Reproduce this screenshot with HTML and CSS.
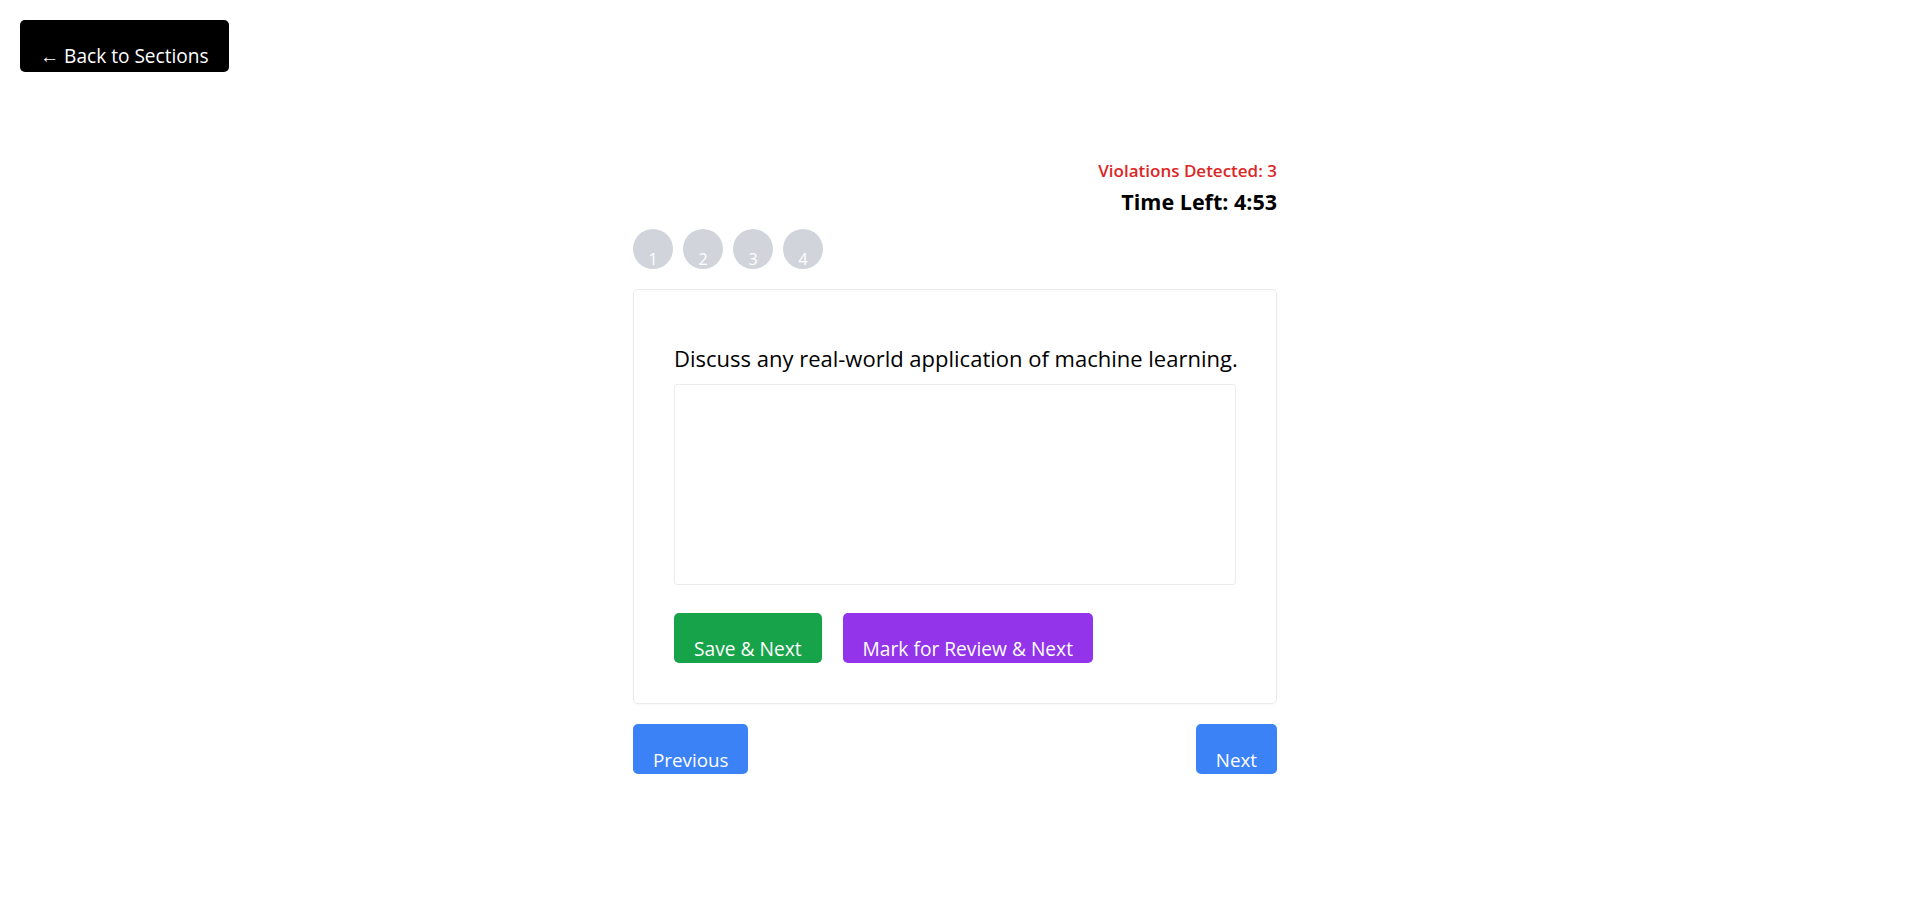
FILE: index.html
```html
<!DOCTYPE html>
<html lang="en">
<head>
<meta charset="utf-8">
<title>Exam</title>
<link rel="stylesheet" href="styles.css">
</head>
<body>
  <button class="back-btn">← Back to Sections</button>
  <main class="exam">
    <div class="status">
      <div class="violations">Violations Detected: 3</div>
      <div class="timer">Time Left: 4:53</div>
    </div>
    <div class="palette">
      <span class="qnum">1</span>
      <span class="qnum">2</span>
      <span class="qnum">3</span>
      <span class="qnum">4</span>
    </div>
    <section class="card">
      <h2 class="question">Discuss any real-world application of machine learning.</h2>
      <textarea class="answer"></textarea>
      <div class="actions">
        <button class="btn btn-green">Save &amp; Next</button>
        <button class="btn btn-purple">Mark for Review &amp; Next</button>
      </div>
    </section>
    <div class="nav">
      <button class="btn btn-blue">Previous</button>
      <button class="btn btn-blue">Next</button>
    </div>
  </main>
</body>
</html>
```

FILE: styles.css
```css
* { box-sizing: border-box; }

html, body {
  margin: 0;
  background: #ffffff;
}

body {
  padding: 20px;
  font-family: "Open Sans", "Noto Sans", sans-serif;
  color: #000;
}

button {
  font-family: inherit;
  border: none;
  cursor: pointer;
}

.back-btn {
  display: block;
  height: 52px;
  padding: 26px 20px 6px;
  background: #000;
  color: #fff;
  font-size: 19.1px;
  line-height: 20px;
  border-radius: 5px;
}

.exam {
  width: 644px;
  margin: 87px auto 0;
}

.status {
  text-align: right;
}

.violations {
  color: #dc2626;
  font-weight: 600;
  font-size: 17px;
  line-height: 24px;
}

.timer {
  margin-top: 4px;
  font-weight: 700;
  font-size: 21.5px;
  line-height: 30px;
}

.palette {
  display: flex;
  gap: 10px;
  margin-top: 12px;
}

.qnum {
  width: 40px;
  height: 40px;
  border-radius: 50%;
  background: #d1d5db;
  color: #fff;
  font-size: 16px;
  line-height: 16px;
  display: flex;
  justify-content: center;
  align-items: flex-end;
  padding-bottom: 2px;
}

.card {
  margin-top: 20px;
  border: 1px solid #ebebeb;
  border-radius: 5px;
  padding: 40px;
  box-shadow: 0 1px 2px rgba(0,0,0,0.03);
}

.question {
  margin: 12px 0 10px;
  font-size: 22px;
  font-weight: 400;
  line-height: 32px;
  white-space: nowrap;
}

.answer {
  display: block;
  width: 100%;
  height: 201px;
  border: 1px solid #ececec;
  border-radius: 3px;
  resize: none;
  font-family: inherit;
  font-size: 18px;
}

.actions {
  display: flex;
  gap: 21px;
  margin-top: 28px;
}

.btn {
  height: 50px;
  padding: 26px 20px 4px;
  color: #fff;
  font-size: 19.2px;
  line-height: 20px;
  border-radius: 5px;
}

.btn-green { background: #16a34a; }
.btn-purple { background: #9333ea; }
.btn-blue { background: #3b82f6; font-size: 18.8px; }

.nav {
  display: flex;
  justify-content: space-between;
  margin-top: 20px;
}
```
